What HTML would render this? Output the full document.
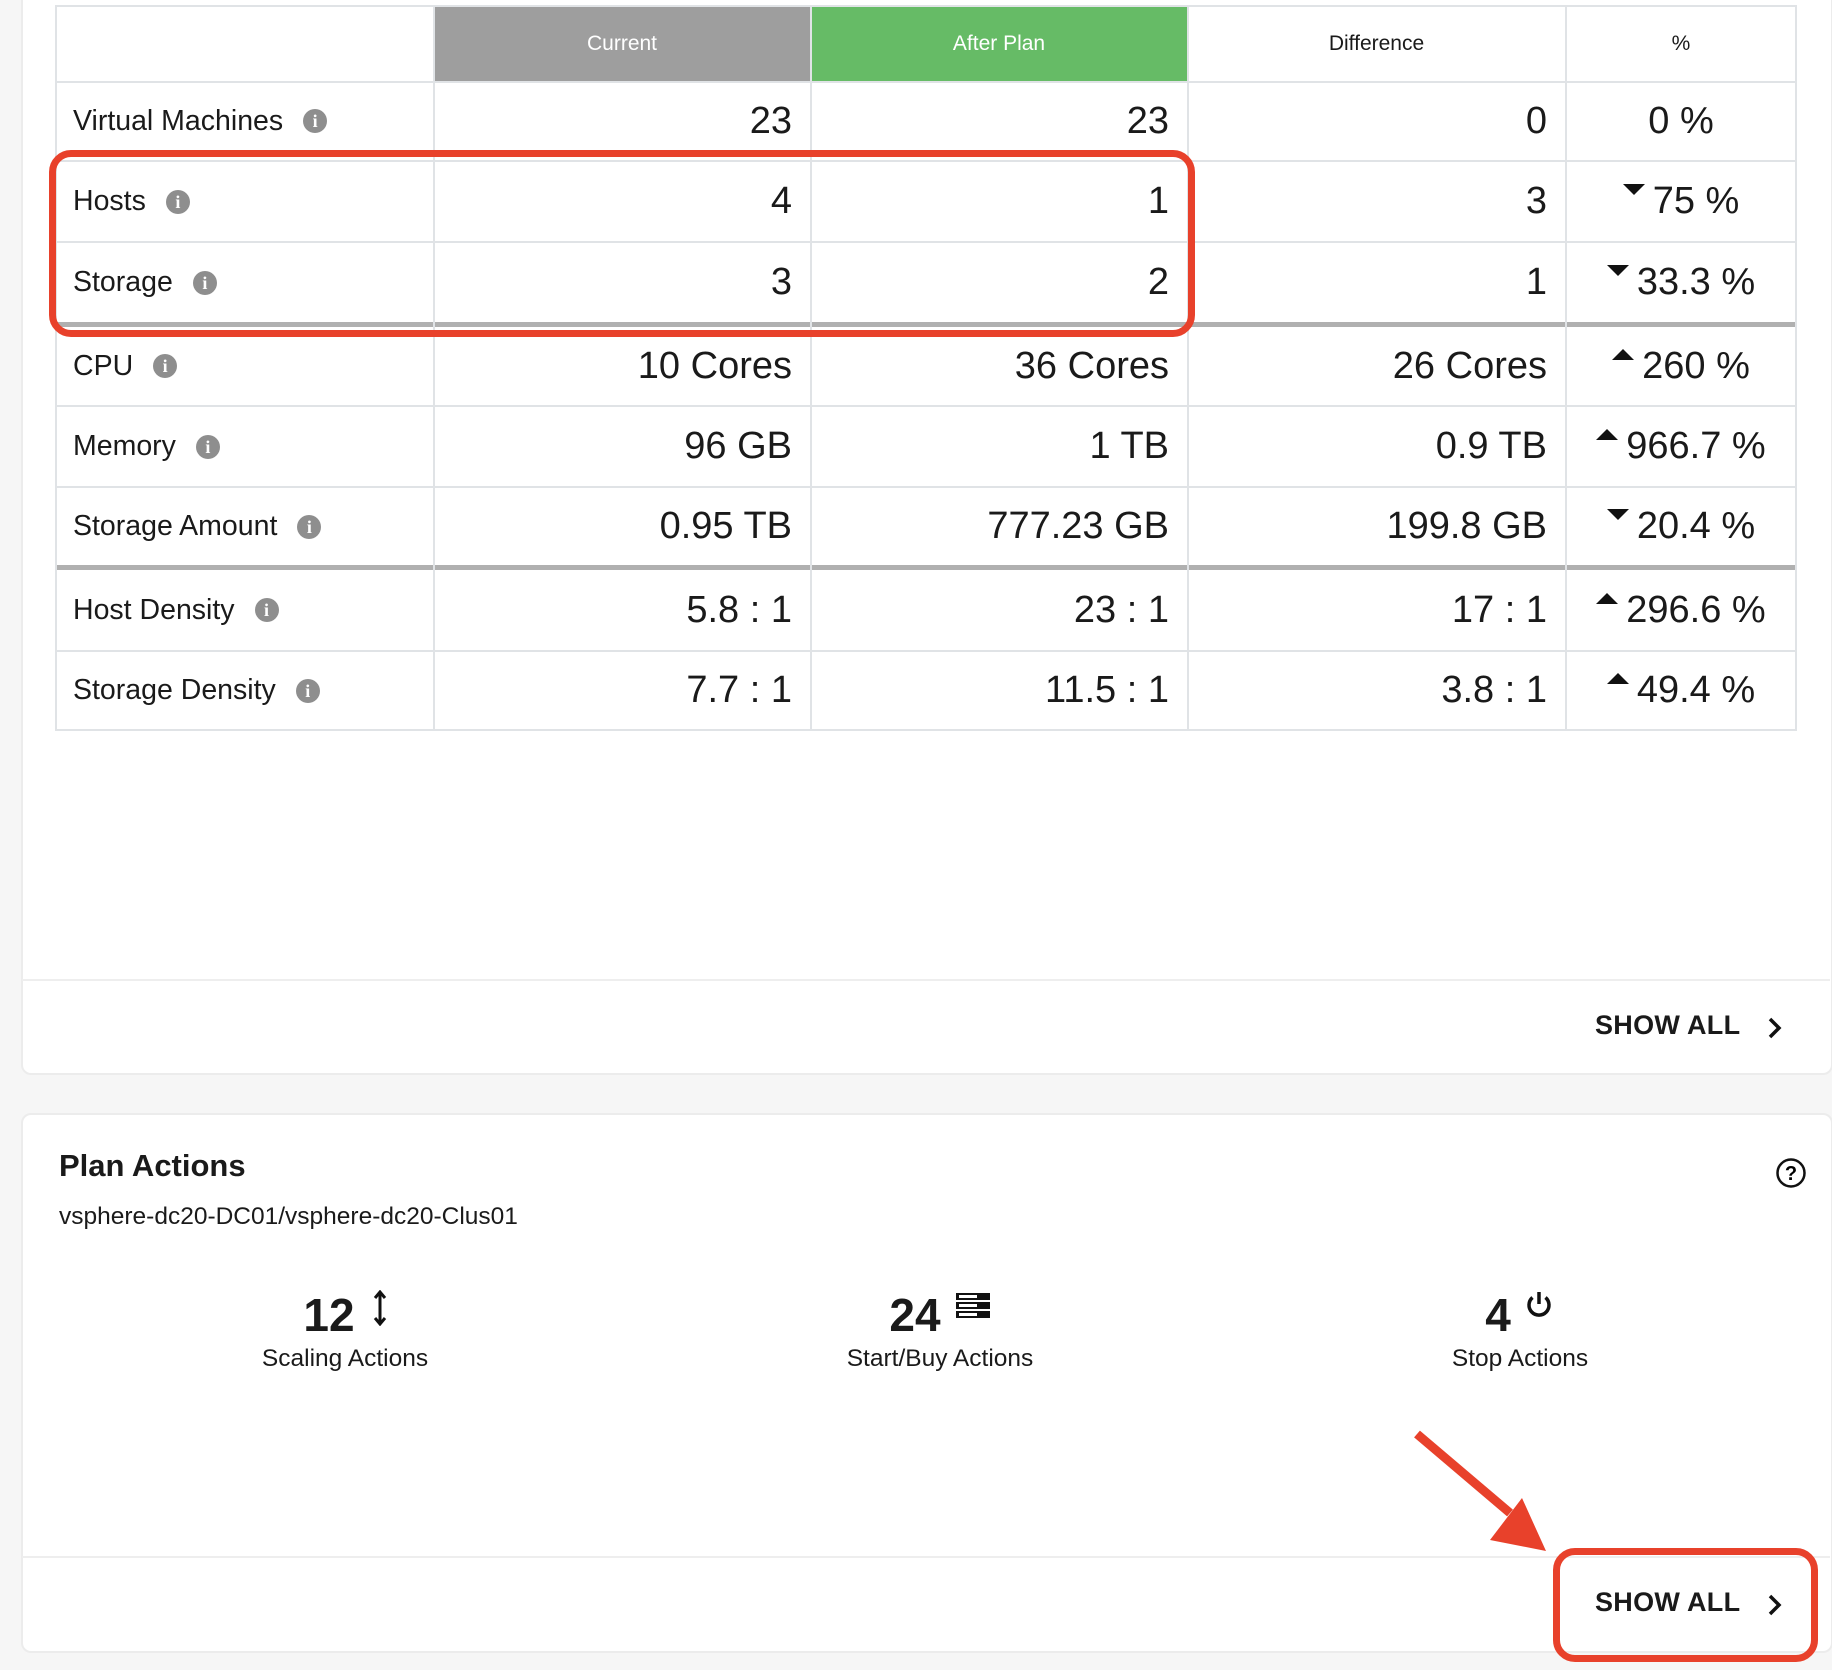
<!DOCTYPE html>
<html><head><meta charset="utf-8"><style>
*{margin:0;padding:0;box-sizing:border-box}
body{width:1832px;height:1670px;background:#f6f6f6;font-family:"Liberation Sans",sans-serif;color:#1a1a1a;position:relative;overflow:hidden}
.abs{position:absolute}
.card{position:absolute;background:#fff;border:2px solid #ececec;border-radius:10px}
.hl{position:absolute;background:#e0e3e6;height:2px}
.vl{position:absolute;background:#e0e3e6;width:2px}
.thick{position:absolute;background:#b0b0b0;height:5px}
.cell{position:absolute;display:flex;align-items:center}
.lbl{font-size:28.5px;padding-left:17px}
.num{font-size:38px;justify-content:flex-end;padding-right:18px}
.pct{font-size:38px;justify-content:center}
.info{display:inline-block;width:24px;height:24px;border-radius:50%;background:#8e8e8e;color:#fff;font-size:18px;font-weight:bold;text-align:center;line-height:24px;margin-left:20px;font-family:"Liberation Serif",serif}
.dn,.up{display:inline-block;width:0;height:0;border-left:11px solid transparent;border-right:11px solid transparent;margin-right:8px}
.dn{border-top:11px solid #111;position:relative;top:-12px}
.up{border-bottom:11px solid #111;position:relative;top:-12px}
.hd{font-size:21px;justify-content:center}
.show{font-size:27px;font-weight:bold;letter-spacing:0.3px}
.red{position:absolute;border:7px solid #e8412b;border-radius:22px}
</style></head><body>
<div class="card" style="left:21px;top:-20px;width:1812px;height:1095px"></div>
<div class="hl" style="left:22px;top:979px;width:1808px;background:#eee"></div>
<div class="card" style="left:21px;top:1113px;width:1812px;height:540px"></div>
<div class="hl" style="left:22px;top:1556px;width:1808px;background:#eee"></div>

<div class="abs" style="left:434px;top:6px;width:376px;height:76px;background:#9e9e9e"></div>
<div class="abs" style="left:811px;top:6px;width:376px;height:76px;background:#66bb66"></div>
<div class="hl" style="left:56px;top:5px;width:1740px"></div>
<div class="hl" style="left:56px;top:81px;width:1740px"></div>
<div class="hl" style="left:56px;top:160px;width:1740px"></div>
<div class="hl" style="left:56px;top:241px;width:1740px"></div>
<div class="thick" style="left:56px;top:322px;width:1740px"></div>
<div class="hl" style="left:56px;top:405px;width:1740px"></div>
<div class="hl" style="left:56px;top:486px;width:1740px"></div>
<div class="thick" style="left:56px;top:565px;width:1740px"></div>
<div class="hl" style="left:56px;top:650px;width:1740px"></div>
<div class="hl" style="left:56px;top:729px;width:1740px"></div>
<div class="vl" style="left:55px;top:5px;height:726px"></div>
<div class="vl" style="left:433px;top:5px;height:726px"></div>
<div class="vl" style="left:810px;top:5px;height:726px"></div>
<div class="vl" style="left:1187px;top:5px;height:726px"></div>
<div class="vl" style="left:1565px;top:5px;height:726px"></div>
<div class="vl" style="left:1795px;top:5px;height:726px"></div>

<div class="cell hd" style="left:434px;top:6px;width:376px;height:76px;color:#fff">Current</div>
<div class="cell hd" style="left:811px;top:6px;width:376px;height:76px;color:#fff">After Plan</div>
<div class="cell hd" style="left:1188px;top:6px;width:377px;height:76px">Difference</div>
<div class="cell hd" style="left:1566px;top:6px;width:230px;height:76px">%</div>

<div class="cell lbl" style="left:56px;top:82px;width:377px;height:78px">Virtual Machines<span class="info">i</span></div>
<div class="cell num" style="left:434px;top:82px;width:376px;height:78px">23</div>
<div class="cell num" style="left:811px;top:82px;width:376px;height:78px">23</div>
<div class="cell num" style="left:1188px;top:82px;width:377px;height:78px">0</div>
<div class="cell pct" style="left:1566px;top:82px;width:230px;height:78px">0 %</div>

<div class="cell lbl" style="left:56px;top:162px;width:377px;height:79px">Hosts<span class="info">i</span></div>
<div class="cell num" style="left:434px;top:162px;width:376px;height:79px">4</div>
<div class="cell num" style="left:811px;top:162px;width:376px;height:79px">1</div>
<div class="cell num" style="left:1188px;top:162px;width:377px;height:79px">3</div>
<div class="cell pct" style="left:1566px;top:162px;width:230px;height:79px"><span class="dn"></span>75 %</div>

<div class="cell lbl" style="left:56px;top:243px;width:377px;height:79px">Storage<span class="info">i</span></div>
<div class="cell num" style="left:434px;top:243px;width:376px;height:79px">3</div>
<div class="cell num" style="left:811px;top:243px;width:376px;height:79px">2</div>
<div class="cell num" style="left:1188px;top:243px;width:377px;height:79px">1</div>
<div class="cell pct" style="left:1566px;top:243px;width:230px;height:79px"><span class="dn"></span>33.3 %</div>

<div class="cell lbl" style="left:56px;top:327px;width:377px;height:78px">CPU<span class="info">i</span></div>
<div class="cell num" style="left:434px;top:327px;width:376px;height:78px">10 Cores</div>
<div class="cell num" style="left:811px;top:327px;width:376px;height:78px">36 Cores</div>
<div class="cell num" style="left:1188px;top:327px;width:377px;height:78px">26 Cores</div>
<div class="cell pct" style="left:1566px;top:327px;width:230px;height:78px"><span class="up"></span>260 %</div>

<div class="cell lbl" style="left:56px;top:407px;width:377px;height:79px">Memory<span class="info">i</span></div>
<div class="cell num" style="left:434px;top:407px;width:376px;height:79px">96 GB</div>
<div class="cell num" style="left:811px;top:407px;width:376px;height:79px">1 TB</div>
<div class="cell num" style="left:1188px;top:407px;width:377px;height:79px">0.9 TB</div>
<div class="cell pct" style="left:1566px;top:407px;width:230px;height:79px"><span class="up"></span>966.7 %</div>

<div class="cell lbl" style="left:56px;top:488px;width:377px;height:77px">Storage Amount<span class="info">i</span></div>
<div class="cell num" style="left:434px;top:488px;width:376px;height:77px">0.95 TB</div>
<div class="cell num" style="left:811px;top:488px;width:376px;height:77px">777.23 GB</div>
<div class="cell num" style="left:1188px;top:488px;width:377px;height:77px">199.8 GB</div>
<div class="cell pct" style="left:1566px;top:488px;width:230px;height:77px"><span class="dn"></span>20.4 %</div>

<div class="cell lbl" style="left:56px;top:570px;width:377px;height:80px">Host Density<span class="info">i</span></div>
<div class="cell num" style="left:434px;top:570px;width:376px;height:80px">5.8 : 1</div>
<div class="cell num" style="left:811px;top:570px;width:376px;height:80px">23 : 1</div>
<div class="cell num" style="left:1188px;top:570px;width:377px;height:80px">17 : 1</div>
<div class="cell pct" style="left:1566px;top:570px;width:230px;height:80px"><span class="up"></span>296.6 %</div>

<div class="cell lbl" style="left:56px;top:652px;width:377px;height:77px">Storage Density<span class="info">i</span></div>
<div class="cell num" style="left:434px;top:652px;width:376px;height:77px">7.7 : 1</div>
<div class="cell num" style="left:811px;top:652px;width:376px;height:77px">11.5 : 1</div>
<div class="cell num" style="left:1188px;top:652px;width:377px;height:77px">3.8 : 1</div>
<div class="cell pct" style="left:1566px;top:652px;width:230px;height:77px"><span class="up"></span>49.4 %</div>

<div class="abs show" style="left:1595px;top:1010px">SHOW ALL</div>
<svg class="abs" style="left:1765px;top:1016px" width="20" height="24"><path d="M5 3 L14 12 L5 21" stroke="#111" stroke-width="3.5" fill="none"/></svg>

<div class="abs" style="left:59px;top:1148px;font-size:31px;font-weight:bold">Plan Actions</div>
<div class="abs" style="left:59px;top:1203px;font-size:24.5px">vsphere-dc20-DC01/vsphere-dc20-Clus01</div>
<svg class="abs" style="left:1775px;top:1157px" width="32" height="32"><circle cx="16" cy="16" r="13.5" stroke="#111" stroke-width="2.5" fill="none"/><text x="16" y="23" font-size="20" font-weight="bold" text-anchor="middle" font-family="Liberation Sans">?</text></svg>

<div class="abs" style="left:229px;top:1288px;width:200px;text-align:center;font-size:46px;font-weight:bold">12</div>
<svg class="abs" style="left:372px;top:1290px" width="16" height="36"><path d="M8 3 V33 M3 8 L8 2 L13 8 M3 28 L8 34 L13 28" stroke="#111" stroke-width="3" fill="none"/></svg>
<div class="abs" style="left:195px;top:1345px;width:300px;text-align:center;font-size:24.5px">Scaling Actions</div>

<div class="abs" style="left:815px;top:1288px;width:200px;text-align:center;font-size:46px;font-weight:bold">24</div>
<svg class="abs" style="left:955px;top:1292px" width="36" height="28"><g fill="#111"><rect x="1" y="1" width="34" height="7"/><rect x="1" y="10" width="34" height="7"/><rect x="1" y="19" width="34" height="7"/></g><g fill="#fff"><rect x="4" y="3" width="18" height="3"/><rect x="4" y="12" width="18" height="3"/><rect x="4" y="21" width="18" height="3"/></g></svg>
<div class="abs" style="left:790px;top:1345px;width:300px;text-align:center;font-size:24.5px">Start/Buy Actions</div>

<div class="abs" style="left:1398px;top:1288px;width:200px;text-align:center;font-size:46px;font-weight:bold">4</div>
<svg class="abs" style="left:1524px;top:1290px" width="30" height="30"><path d="M8.5 7.5 A10 10 0 1 0 21.5 7.5" stroke="#111" stroke-width="3.5" fill="none"/><path d="M15 2 V14" stroke="#111" stroke-width="3.5"/></svg>
<div class="abs" style="left:1370px;top:1345px;width:300px;text-align:center;font-size:24.5px">Stop Actions</div>

<div class="abs show" style="left:1595px;top:1587px">SHOW ALL</div>
<svg class="abs" style="left:1765px;top:1593px" width="20" height="24"><path d="M5 3 L14 12 L5 21" stroke="#111" stroke-width="3.5" fill="none"/></svg>

<div class="red" style="left:49px;top:150px;width:1146px;height:187px"></div>
<div class="red" style="left:1553px;top:1548px;width:265px;height:114px"></div>
<svg class="abs" style="left:1400px;top:1420px" width="160" height="140"><path d="M17 14 L110 93" stroke="#e8412b" stroke-width="9"/><path d="M90 120 L146 131 L122 78 Z" fill="#e8412b"/></svg>
</body></html>
